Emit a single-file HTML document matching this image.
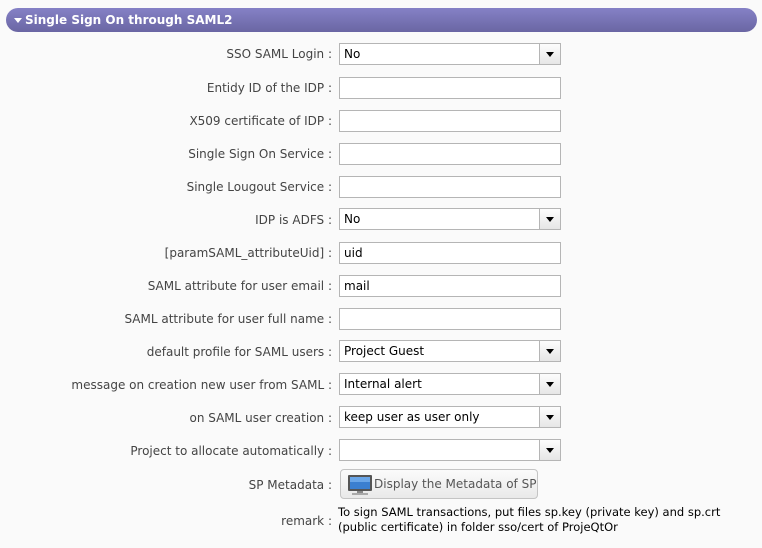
<!DOCTYPE html>
<html><head><style>
body{margin:0;background:#fafafa;width:762px;height:548px;overflow:hidden;font-family:"DejaVu Sans",Verdana,sans-serif;font-size:12px;color:#333;position:relative}
.hd{position:absolute;left:6px;top:8px;width:751px;height:24px;border-radius:12px;background:linear-gradient(#8581c6,#6a66a3);color:#fff;font-weight:bold;font-size:12px;line-height:24px}
.hd span{position:absolute;left:19px;top:0}
.tri{position:absolute;left:8px;top:10px;width:0;height:0;border-left:4px solid transparent;border-right:4px solid transparent;border-top:5px solid #fff}
.lab{position:absolute;right:430px;top:0;text-align:right;white-space:nowrap;color:#444}
.inp{position:absolute;left:339px;width:216px;height:20px;border:1px solid #b5b5b5;background:#fff;color:#000;line-height:20px;padding-left:4px}
.sel .arr{position:absolute;right:0;top:0;width:20px;height:20px;border-left:1px solid #b5b5b5;background:linear-gradient(#fdfdfd,#e6e6e6)}
.sel .arr:after{content:"";position:absolute;left:6px;top:8px;border-left:4px solid transparent;border-right:4px solid transparent;border-top:5px solid #000}
.btn{position:absolute;left:340px;top:469px;width:198px;height:30px;border:1px solid #c4c4c4;border-radius:4px;background:linear-gradient(#fbfbfb,#e9e9e9);box-sizing:border-box;color:#555;font-size:12px;line-height:28px}
.rem{position:absolute;left:338px;top:505px;color:#000;line-height:15px;font-size:11.5px}
</style></head><body>
<div class="hd"><div class="tri"></div><span>Single Sign On through SAML2</span></div>

<div class="lab" style="top:47px">SSO SAML Login :</div>
<div class="inp sel" style="top:43px">No<div class="arr"></div></div>
<div class="lab" style="top:81px">Entidy ID of the IDP :</div>
<div class="inp" style="top:77px"></div>
<div class="lab" style="top:114px">X509 certificate of IDP :</div>
<div class="inp" style="top:110px"></div>
<div class="lab" style="top:147px">Single Sign On Service :</div>
<div class="inp" style="top:143px"></div>
<div class="lab" style="top:180px">Single Lougout Service :</div>
<div class="inp" style="top:176px"></div>
<div class="lab" style="top:213px">IDP is ADFS :</div>
<div class="inp sel" style="top:208px">No<div class="arr"></div></div>
<div class="lab" style="top:246px">[paramSAML_attributeUid] :</div>
<div class="inp" style="top:242px">uid</div>
<div class="lab" style="top:279px">SAML attribute for user email :</div>
<div class="inp" style="top:275px">mail</div>
<div class="lab" style="top:312px">SAML attribute for user full name :</div>
<div class="inp" style="top:308px"></div>
<div class="lab" style="top:345px">default profile for SAML users :</div>
<div class="inp sel" style="top:340px">Project Guest<div class="arr"></div></div>
<div class="lab" style="top:378px">message on creation new user from SAML :</div>
<div class="inp sel" style="top:373px">Internal alert<div class="arr"></div></div>
<div class="lab" style="top:411px">on SAML user creation :</div>
<div class="inp sel" style="top:406px">keep user as user only<div class="arr"></div></div>
<div class="lab" style="top:444px">Project to allocate automatically :</div>
<div class="inp sel" style="top:439px"><div class="arr"></div></div>
<div class="lab" style="top:478px">SP Metadata :</div>
<div class="btn"><svg style="position:absolute;left:6px;top:4px" width="26" height="22" viewBox="0 0 26 22"><rect x="1" y="1" width="24" height="16" rx="1" fill="#555"/><rect x="3" y="3" width="20" height="12" fill="#3b7fd0"/><rect x="3" y="3" width="20" height="5" fill="#6aa6e8"/><rect x="10" y="17" width="6" height="2" fill="#888"/><rect x="5" y="19" width="16" height="2" fill="#aaa"/></svg><span style="position:absolute;left:33px">Display the Metadata of SP</span></div>
<div class="lab" style="top:514px">remark :</div>
<div class="rem">To sign SAML transactions, put files sp.key (private key) and sp.crt<br>(public certificate) in folder sso/cert of ProjeQtOr</div>
</body></html>
